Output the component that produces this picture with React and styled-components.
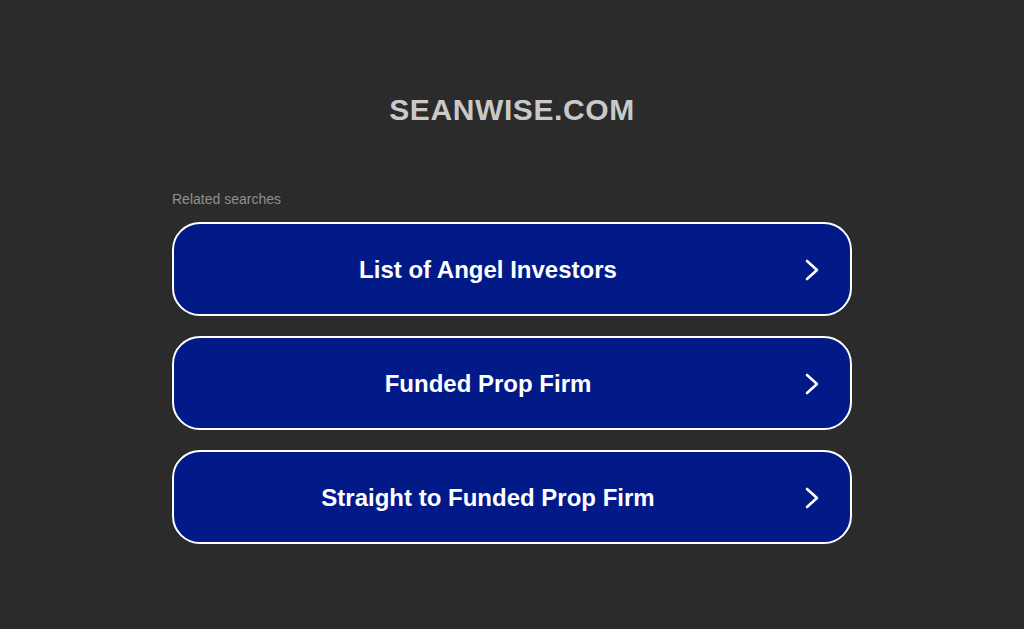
import React from "react";
import styled, { createGlobalStyle } from "styled-components";

const GlobalStyle = createGlobalStyle`
  html, body {
    margin: 0;
    padding: 0;
    background-color: #2b2b2b;
    font-family: "Liberation Sans", Arial, sans-serif;
  }
`;

const Page = styled.main`
  min-height: 629px;
  display: flex;
  flex-direction: column;
  align-items: center;
`;

const Title = styled.h1`
  margin: 92px 0 0;
  font-size: 30px;
  line-height: 36px;
  font-weight: 700;
  letter-spacing: 0.6px;
  color: #c9c9c9;
`;

const Results = styled.section`
  width: 680px;
  margin-top: 62px;
`;

const Label = styled.div`
  font-size: 14px;
  line-height: 18px;
  color: #8f8f8f;
  margin-bottom: 14px;
`;

const List = styled.div`
  display: flex;
  flex-direction: column;
  gap: 20px;
`;

const Link = styled.a`
  box-sizing: border-box;
  height: 94px;
  display: flex;
  align-items: center;
  padding: 2px 26px 0 2px;
  background-color: #021a88;
  border: 2px solid #ffffff;
  border-radius: 28px;
  color: #ffffff;
  text-decoration: none;
  cursor: pointer;
`;

const Text = styled.span`
  flex: 1;
  text-align: center;
  font-size: 24px;
  font-weight: 700;
`;

const Arrow = styled.span`
  width: 24px;
  display: flex;
  justify-content: center;
`;

const Chevron = () => (
  <svg width="14" height="22" viewBox="0 0 14 22" fill="none">
    <polyline
      points="2,2 12,11 2,20"
      stroke="#ffffff"
      strokeWidth="2.6"
      strokeLinecap="round"
      strokeLinejoin="round"
    />
  </svg>
);

const items = ["List of Angel Investors", "Funded Prop Firm", "Straight to Funded Prop Firm"];

export default function App() {
  return (
    <>
      <GlobalStyle />
      <Page>
        <Title>SEANWISE.COM</Title>
        <Results>
          <Label>Related searches</Label>
          <List>
            {items.map((t) => (
              <Link key={t}>
                <Text>{t}</Text>
                <Arrow>
                  <Chevron />
                </Arrow>
              </Link>
            ))}
          </List>
        </Results>
      </Page>
    </>
  );
}
